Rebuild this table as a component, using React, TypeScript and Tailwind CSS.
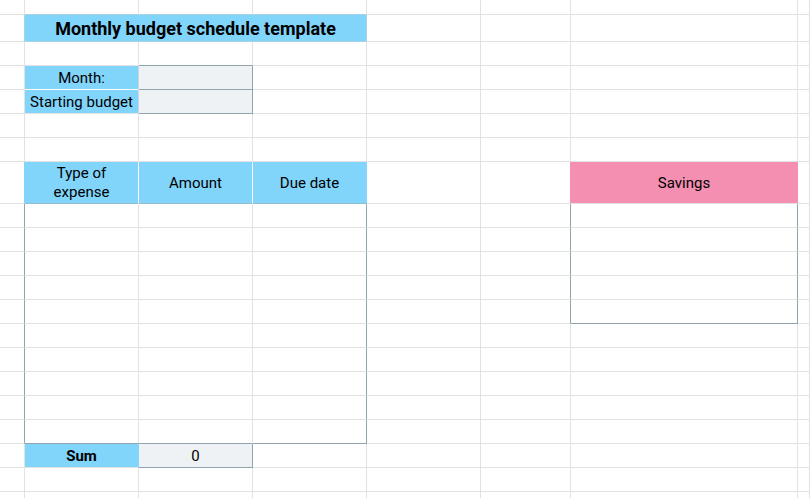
import { ReactNode } from 'react';

// sheet colours
const EDGE_R = "border-r-[#90a4ae]";
const EDGE_B = "border-b-[#90a4ae]";
const TITLE_R = "border-r-[#a8d2e4]";
const TITLE_B = "border-b-[#a8d2e4]";
const HEAD_B = "border-b-[#93bccf]";
const BLUE = "bg-[#81d4fa]";
const GREY = "bg-[#eef2f4]";

interface CellProps {
    r?: string,
    b?: string,
    className?: string,
    children?: ReactNode
}

const Cell = ({ r = "border-r-[#e2e2e2]", b = "border-b-[#e2e2e2]", className = "", children }: CellProps) => (
    <div className={`flex items-center justify-center text-center border-r border-b ${r} ${b} ${className}`}>
        {children}
    </div>
);

const blanks = (n: number) => Array.from({ length: n }, (_, i) => <Cell key={i} />);

const App = () => {
    const dataRows = Array.from({ length: 10 }, (_, i) => i);

    return (
        <div className="w-[810px] h-[498px] overflow-hidden bg-white font-[Roboto,sans-serif] text-[15px] text-black">
            <div className="grid grid-cols-[25px_114px_114px_114px_114px_90px_227px_1fr] grid-rows-[15px_27px_24px_24px_24px_24px_24px_42px_repeat(13,24px)]">
                {/* row 1 */}
                <Cell />
                <Cell b={TITLE_B} />
                <Cell b={TITLE_B} />
                <Cell b={TITLE_B} />
                {blanks(4)}

                {/* title */}
                <Cell r={TITLE_R} />
                <Cell r={TITLE_R} b={TITLE_B} className={`col-span-3 ${BLUE} text-[18px] font-bold`}>
                    Monthly budget schedule template
                </Cell>
                {blanks(4)}

                {/* spacer */}
                <Cell />
                <Cell />
                <Cell b={EDGE_B} />
                {blanks(5)}

                {/* month / starting budget */}
                <Cell />
                <Cell r="border-r-[#c9d6dc]" b="border-b-white" className={`${BLUE} pt-[2px]`}>Month:</Cell>
                <Cell r={EDGE_R} b={EDGE_B} className={GREY} />
                {blanks(5)}

                <Cell />
                <Cell r="border-r-[#c9d6dc]" className={`${BLUE} pt-[2px]`}>Starting budget</Cell>
                <Cell r={EDGE_R} b={EDGE_B} className={GREY} />
                {blanks(5)}

                {blanks(8)}
                {blanks(8)}

                {/* headers */}
                <Cell r="border-r-[#81d4fa]" />
                <Cell r="border-r-white" b={HEAD_B} className={`${BLUE} leading-[19px]`}>Type of<br />expense</Cell>
                <Cell r="border-r-white" b={HEAD_B} className={`${BLUE} pt-[2px]`}>Amount</Cell>
                <Cell r="border-r-[#81d4fa]" b={HEAD_B} className={`${BLUE} pt-[2px]`}>Due date</Cell>
                <Cell />
                <Cell r="border-r-[#f48fb1]" />
                <Cell r="border-r-[#f48fb1]" className="bg-[#f48fb1] pt-[2px]">Savings</Cell>
                <Cell />

                {/* expense rows + savings box */}
                {dataRows.map((i) => (
                    <div key={i} className="contents">
                        <Cell r={EDGE_R} />
                        <Cell b={i === 9 ? EDGE_B : undefined} />
                        <Cell b={i === 9 ? EDGE_B : undefined} />
                        <Cell r={EDGE_R} b={i === 9 ? EDGE_B : undefined} />
                        <Cell />
                        <Cell r={i < 5 ? EDGE_R : undefined} />
                        <Cell r={i < 5 ? EDGE_R : undefined} b={i === 4 ? EDGE_B : undefined} />
                        <Cell />
                    </div>
                ))}

                {/* sum */}
                <Cell />
                <Cell r="border-r-[#81d4fa]" className={`${BLUE} font-bold pt-[2px]`}>Sum</Cell>
                <Cell r={EDGE_R} b={EDGE_B} className={`${GREY} pt-[2px]`}>0</Cell>
                {blanks(5)}

                {blanks(8)}
                {blanks(8)}
            </div>
        </div>
    );
};

export default App;
